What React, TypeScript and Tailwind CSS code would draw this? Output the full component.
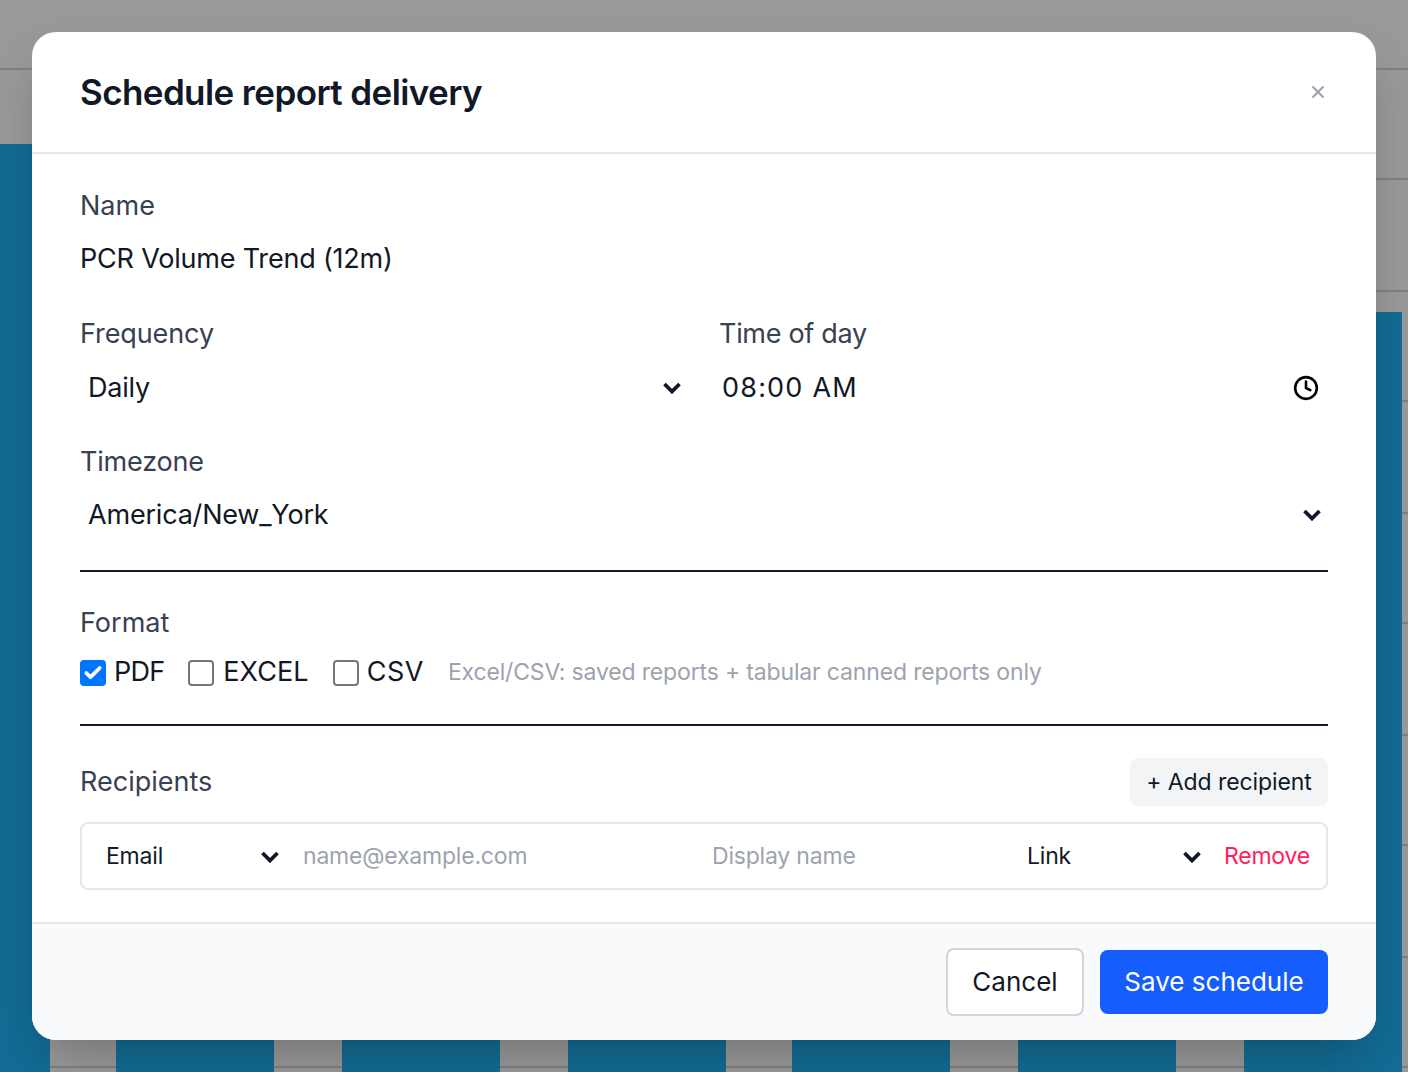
import { Check, Clock, X } from 'lucide-react'

const fontClass = "font-['Inter','Noto_Sans',sans-serif]"

// Dimmed chart behind the dialog
const BackgroundChart = () => {
  const bars = [
    { x: -108, y: 144 },
    { x: 116, y: 700 },
    { x: 342, y: 700 },
    { x: 568, y: 700 },
    { x: 792, y: 700 },
    { x: 1018, y: 700 },
    { x: 1244, y: 312 },
  ]
  const lines = [68, 178, 290, 400, 512, 622, 734, 844, 956, 1066]
  return (
    <svg className="absolute inset-0" width="1408" height="1072" viewBox="0 0 1408 1072">
      <rect width="1408" height="1072" fill="#999999" />
      {lines.map((y) => (
        <rect key={y} x="0" y={y} width="1408" height="2" fill="#808080" />
      ))}
      {bars.map((b) => (
        <rect key={b.x} x={b.x} y={b.y} width="158" height={1072 - b.y} fill="#126c94" />
      ))}
    </svg>
  )
}

const Label = ({ children, className }: { children: React.ReactNode; className?: string }) => (
  <div className={`text-[27px] leading-[32px] text-[#374151] ${className ?? ''}`}>{children}</div>
)

// Native select arrow
const Chevron = () => (
  <svg width="18" height="12" viewBox="0 0 18 12" fill="none" className="shrink-0">
    <path d="M1.5 2 L9 9.5 L16.5 2" stroke="#111827" strokeWidth="3.8" />
  </svg>
)

const SelectValue = ({ value, className }: { value: string; className: string }) => (
  <div className={`flex items-center justify-between text-[#111827] ${className}`}>
    <span>{value}</span>
    <Chevron />
  </div>
)

const Box = ({ label, checked, textClass }: { label: string; checked?: boolean; textClass?: string }) => (
  <label className="flex items-center gap-[8px]">
    {checked ? (
      <span className="flex h-[26px] w-[26px] items-center justify-center rounded-[4px] bg-[#0075ff]">
        <Check size={20} strokeWidth={4.5} className="text-white" />
      </span>
    ) : (
      <span className="h-[26px] w-[26px] rounded-[4px] border-2 border-[#767676] bg-white" />
    )}
    <span className={`-mt-[2px] text-[27px] leading-[32px] text-[#111827] ${textClass ?? ''}`}>{label}</span>
  </label>
)

export default function App() {
  return (
    <div className={`relative h-[1072px] w-[1408px] overflow-hidden ${fontClass}`}>
      <BackgroundChart />
      <div className="absolute inset-0 p-8">
        <div className="flex h-full w-full flex-col overflow-hidden rounded-[24px] bg-white shadow-2xl">
          <div className="flex h-[122px] items-center justify-between border-b-2 border-[#e5e7eb] px-12">
            <h2 className="text-[35px] font-semibold leading-[40px] tracking-[-0.6px] text-[#111827]">Schedule report delivery</h2>
            <X size={20} strokeWidth={2.5} className="text-[#9ca3af]" />
          </div>

          <div className="flex flex-1 flex-col px-12 pt-9">
            <Label>Name</Label>
            <div className="mt-[21px] text-[27px] leading-[32px] tracking-[-0.2px] text-[#111827]">PCR Volume Trend (12m)</div>

            <div className="mt-[43px] grid grid-cols-2 gap-8">
              <div>
                <Label className="tracking-[-0.1px]">Frequency</Label>
                <SelectValue value="Daily" className="mt-[22px] h-[32px] pl-2 pr-[7px] text-[27px] tracking-[-0.2px]" />
              </div>
              <div>
                <Label className="-ml-px tracking-[-0.3px]">Time of day</Label>
                <div className="mt-[22px] flex h-[32px] items-center justify-between pl-[2px] pr-[9px] text-[27px] tracking-[1.2px] text-[#111827]">
                  <span>08:00 AM</span>
                  <Clock size={26} strokeWidth={2.4} className="text-black" />
                </div>
              </div>
            </div>

            <div className="mt-[42px]">
              <Label className="tracking-[-0.2px]">Timezone</Label>
              <SelectValue value="America/New_York" className="mt-[21px] h-[32px] pl-2 pr-[7px] text-[27px] tracking-[-0.2px]" />
            </div>

            <div className="mt-[39px] border-t-2 border-[#111827] pt-[35px]">
              <Label>Format</Label>
              <div className="mt-[17px] flex items-center gap-6">
                <Box label="PDF" checked textClass="tracking-[-0.8px]" />
                <Box label="EXCEL" textClass="ml-px tracking-[0.1px]" />
                <Box label="CSV" textClass="tracking-[0.5px]" />
                <span className="-mt-px text-[23px] tracking-[-0.16px] text-[#9ca3af]">Excel/CSV: saved reports + tabular canned reports only</span>
              </div>
            </div>

            <div className="mt-[34px] border-t-2 border-[#111827] pt-8">
              <div className="flex items-center justify-between">
                <Label>Recipients</Label>
                <button className="h-12 w-[198px] rounded-[8px] bg-[#f3f4f6] pt-[2px] text-[23px] tracking-[-0.1px] text-[#111827]">+ Add recipient</button>
              </div>
              <div className="mt-4 flex h-[68px] items-center rounded-[8px] border-2 border-[#e5e7eb] pl-6 pr-4 pt-[2px] text-[23px] tracking-[-0.2px]">
                <SelectValue value="Email" className="w-[173px]" />
                <span className="ml-[24px] w-[409px] text-[#9ca3af]">name@example.com</span>
                <span className="w-[315px] text-[#9ca3af]">Display name</span>
                <SelectValue value="Link" className="w-[174px]" />
                <span className="ml-auto text-rose-500">Remove</span>
              </div>
            </div>
          </div>

          <div className="flex h-[118px] items-center justify-end gap-4 border-t-2 border-[#e5e7eb] bg-[#f9fafb] px-12">
            <button className="h-[68px] w-[138px] rounded-[8px] border-2 border-[#d1d5db] bg-white pb-[2px] text-[26px] text-[#111827]">Cancel</button>
            <button className="h-16 w-[228px] rounded-[8px] bg-[#155dfc] pb-[2px] text-[26px] text-white">Save schedule</button>
          </div>
        </div>
      </div>
    </div>
  )
}
